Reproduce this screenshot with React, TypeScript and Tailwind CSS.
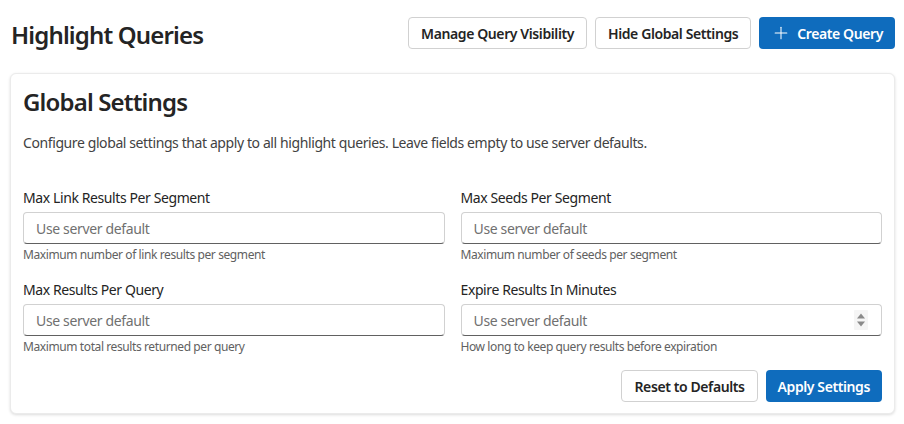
import { Plus } from 'lucide-react';

const fields = [
    { label: 'Max Link Results Per Segment', hint: 'Maximum number of link results per segment' },
    { label: 'Max Seeds Per Segment', hint: 'Maximum number of seeds per segment' },
    { label: 'Max Results Per Query', hint: 'Maximum total results returned per query' },
    { label: 'Expire Results In Minutes', hint: 'How long to keep query results before expiration', spin: true },
];

// little up/down arrows of the number stepper
function SpinArrows() {
    return (
        <svg width="14" height="20" viewBox="0 0 14 20" className="shrink-0">
            <rect x="0" y="0" width="14" height="20" rx="1" fill="#f5f5f5" />
            <path d="M7 3.5 L11 8.5 L3 8.5 Z" fill="#8a8a8a" />
            <path d="M7 16.5 L11 11.5 L3 11.5 Z" fill="#8a8a8a" />
        </svg>
    );
}

function Field({ label, hint, spin }: { label: string; hint: string; spin?: boolean }) {
    return (
        <div className="flex flex-col">
            <label className="text-[14px] leading-[20px] text-[#242424]">{label}</label>
            <div className="mt-1 flex h-8 items-center rounded border border-[#d1d1d1] border-b-[#616161] bg-white pl-3 pr-[13px]">
                <input
                    type="text"
                    placeholder="Use server default"
                    className="w-full bg-transparent text-[14px] tracking-[-0.025em] text-[#242424] outline-none placeholder:text-[#707070]"
                />
                {spin && <SpinArrows />}
            </div>
            <span className="mt-[3px] text-[12px] leading-4 text-[#616161]">{hint}</span>
        </div>
    );
}

export default function App() {
    return (
        <div className="min-h-screen bg-white pl-[10px] pr-[9px] pt-[17px] font-['Noto_Sans',sans-serif] tracking-[-0.025em] text-[#242424]">
            <div className="flex items-start justify-between">
                <h1 className="ml-[1px] mt-[2px] text-[24px] font-semibold leading-8 tracking-[-0.035em]">Highlight Queries</h1>
                <div className="flex gap-2">
                    <button className="h-8 rounded border border-[#d1d1d1] bg-white px-3 text-[14px] font-semibold">
                        Manage Query Visibility
                    </button>
                    <button className="h-8 rounded border border-[#d1d1d1] bg-white px-3 text-[14px] font-semibold">
                        Hide Global Settings
                    </button>
                    <button className="flex h-8 items-center gap-[6px] rounded bg-[#0f6cbd] px-3 text-[14px] font-semibold text-white">
                        <Plus size={20} strokeWidth={1.25} />
                        Create Query
                    </button>
                </div>
            </div>

            <div className="mt-[22px] rounded-md border border-[#ebebeb] bg-white px-3 pb-[11px] pt-3 shadow-[0_1px_3px_rgba(0,0,0,0.14)]">
                <h2 className="text-[24px] font-semibold leading-8 tracking-[-0.035em]">Global Settings</h2>
                <p className="mt-[15px] text-[14px] leading-5 text-[#424242]">
                    Configure global settings that apply to all highlight queries. Leave fields empty to use server defaults.
                </p>

                <div className="mt-[35px] grid grid-cols-2 gap-x-4 gap-y-[17px]">
                    {fields.map((f) => (
                        <Field key={f.label} {...f} />
                    ))}
                </div>

                <div className="mt-[15px] flex justify-end gap-2">
                    <button className="h-8 rounded border border-[#d1d1d1] bg-white px-3 text-[14px] font-semibold">
                        Reset to Defaults
                    </button>
                    <button className="h-8 rounded bg-[#0f6cbd] px-3 text-[14px] font-semibold text-white">
                        Apply Settings
                    </button>
                </div>
            </div>
        </div>
    );
}
